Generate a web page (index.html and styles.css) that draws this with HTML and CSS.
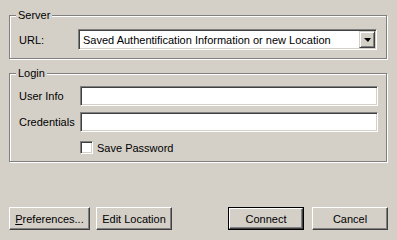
FILE: index.html
```html
<!DOCTYPE html>
<html lang="en">
  <head>
    <meta charset="utf8" />
    <title>Connect</title>
    <link rel="stylesheet" href="styles.css">
  </head>
  <body>
    <div class="dialog">
      <div class="group group-server">
        <span class="legend">Server</span>
        <div class="row">
          <span class="field-label">URL:</span>
          <div class="combo">
            <span class="combo-text">Saved Authentification Information or new Location</span>
            <span class="combo-btn"><span class="arrow"></span></span>
          </div>
        </div>
      </div>
      <div class="group group-login">
        <span class="legend">Login</span>
        <div class="row">
          <span class="field-label label-wide">User Info</span>
          <input class="text-input" type="text" />
        </div>
        <div class="row row-gap">
          <span class="field-label label-wide">Credentials</span>
          <input class="text-input" type="password" />
        </div>
        <label class="check-row">
          <span class="checkbox"></span>
          <span>Save Password</span>
        </label>
      </div>
      <div class="buttons">
        <button class="btn btn-prefs"><u>P</u>references...</button>
        <button class="btn btn-edit">Edit Location</button>
        <span class="spacer"></span>
        <span class="default-frame"><button class="btn">Connect</button></span>
        <button class="btn btn-cancel">Cancel</button>
      </div>
    </div>
  </body>
</html>
```
FILE: styles.css
```css
/* Reset */
body, html {
  margin: 0;
  padding: 0;
  background: #d4d0c8;
  font-family: "Liberation Sans", Arial, sans-serif;
  font-size: 11px;
  color: #000;
}
* {
  box-sizing: border-box;
}
.dialog {
  width: 397px;
  height: 240px;
  padding-top: 15px;
}
/* etched group box */
.group {
  width: 378px;
  margin-left: 9px;
  border: 1px solid #808080;
  box-shadow: 1px 1px 0 #fff, inset 1px 1px 0 #fff;
  padding: 0 0 0 9px;
}
.group-server {
  height: 44px;
}
.group-login {
  height: 89px;
  margin-top: 14px;
}
.legend {
  display: block;
  width: max-content;
  height: 13px;
  line-height: 13px;
  margin: -7px 0 0 -3px;
  padding: 0 2px;
  background: #d4d0c8;
}
.row {
  display: flex;
  align-items: center;
  margin-top: 7px;
}
.group-login .row {
  margin-top: 6px;
}
.field-label {
  width: 59px;
  flex: none;
}
.label-wide {
  width: 61px;
}
/* sunken field */
.combo, .text-input, .checkbox {
  border: 1px solid;
  border-color: #808080 #fff #fff #808080;
  box-shadow: inset 1px 1px 0 #404040, inset -1px -1px 0 #d4d0c8;
  background: #fff;
}
.combo {
  width: 299px;
  height: 21px;
  display: flex;
  align-items: center;
  padding: 1px;
}
.combo-text {
  flex: 1;
  padding-left: 3px;
  white-space: nowrap;
}
.combo-btn {
  width: 16px;
  height: 17px;
  flex: none;
  display: flex;
  align-items: center;
  justify-content: center;
  border: 1px solid;
  border-color: #d4d0c8 #404040 #404040 #d4d0c8;
  box-shadow: inset 1px 1px 0 #fff, inset -1px -1px 0 #808080;
  background: #d4d0c8;
}
.arrow {
  width: 0;
  height: 0;
  border-left: 4px solid transparent;
  border-right: 3px solid transparent;
  border-top: 4px solid #000;
  margin-top: 1px;
}
.text-input {
  width: 298px;
  height: 20px;
  margin: 0;
  padding: 0 3px;
  font: inherit;
  outline: none;
}
.check-row {
  display: flex;
  align-items: center;
  margin: 9px 0 0 61px;
  height: 13px;
}
.checkbox {
  width: 13px;
  height: 13px;
  margin-right: 4px;
}
.buttons {
  display: flex;
  margin-top: 45px;
  padding: 0 9px;
}
.spacer {
  flex: 1;
}
.btn {
  height: 23px;
  width: 76px;
  margin: 0;
  padding: 0;
  font: inherit;
  color: #000;
  background: #d4d0c8;
  border: 1px solid;
  border-color: #fff #404040 #404040 #fff;
  box-shadow: inset -1px -1px 0 #808080;
}
.btn-prefs {
  width: 81px;
}
.btn-edit {
  margin-left: 6px;
}
.default-frame {
  display: flex;
  border: 1px solid #000;
  height: 23px;
}
.default-frame .btn {
  height: 21px;
  width: 74px;
}
.btn-cancel {
  margin-left: 8px;
}
```
